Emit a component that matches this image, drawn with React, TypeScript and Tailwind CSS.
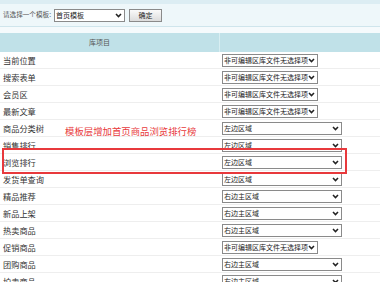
import React from 'react'

const rows: { name: string; kind: 'lib' | 'left' | 'right' }[] = [
  { name: '当前位置', kind: 'lib' },
  { name: '搜索表单', kind: 'lib' },
  { name: '会员区', kind: 'lib' },
  { name: '最新文章', kind: 'lib' },
  { name: '商品分类树', kind: 'left' },
  { name: '销售排行', kind: 'left' },
  { name: '浏览排行', kind: 'left' },
  { name: '发货单查询', kind: 'left' },
  { name: '精品推荐', kind: 'right' },
  { name: '新品上架', kind: 'right' },
  { name: '热卖商品', kind: 'right' },
  { name: '促销商品', kind: 'lib' },
  { name: '团购商品', kind: 'right' },
  { name: '拍卖商品', kind: 'right' },
]

const labels = {
  lib: '非可编辑区库文件无选择项',
  left: '左边区域',
  right: '右边主区域',
}

function Chevron() {
  return (
    <svg width="7" height="5" viewBox="0 0 7 5" className="shrink-0">
      <path d="M1 1 L3.5 3.6 L6 1" fill="none" stroke="#222" strokeWidth="1.5" />
    </svg>
  )
}

function FakeSelect({ text, width }: { text: string; width: string }) {
  return (
    <div
      className={`${width} h-[13px] flex items-center justify-between border border-[#8a8a8a] bg-white pl-[1px] pr-[2px] text-[7px] leading-none text-[#222] whitespace-nowrap overflow-hidden`}
    >
      <span>{text}</span>
      <Chevron />
    </div>
  )
}

export default function App() {
  return (
    <div
      className="relative w-[380px] h-[282px] overflow-hidden bg-white"
      style={{ fontFamily: '"Noto Sans CJK SC", "Noto Sans", sans-serif' }}
    >
      <div className="h-[4px] bg-[#dcedf3]" />
      <div className="h-[23px] bg-[#eef7fa] border-b border-[#cfe5ec] flex items-center pl-[3px]">
        <span className="text-[6.6px] text-[#555] mr-[3px]">请选择一个模板:</span>
        <FakeSelect text="首页模板" width="w-[71px]" />
        <div className="ml-[4px] w-[33px] h-[13px] flex items-center justify-center border border-[#8a8a8a] bg-gradient-to-b from-[#fafafa] to-[#dcdcdc] text-[7px] text-[#222]">
          确定
        </div>
      </div>
      <div className="h-[6px] bg-[#f5fafc]" />
      <div className="h-[19px] bg-[#c0e1e8] flex">
        <div className="w-[220px] flex items-center justify-center pr-[20px] text-[7px] text-[#555] border-r border-[#d8eef2]">
          库项目
        </div>
        <div className="flex-1" />
      </div>
      <div>
        {rows.map((r) => (
          <div key={r.name} className="h-[17px] flex items-center border-b border-[#eeeeee]">
            <div className="w-[220px] pl-[3px] text-[8.2px] text-[#333]">{r.name}</div>
            <div className="pl-[2px]">
              <FakeSelect text={labels[r.kind]} width={r.kind === 'lib' ? 'w-[96px]' : 'w-[120px]'} />
            </div>
          </div>
        ))}
      </div>

      <div className="absolute left-[65px] top-[127px] text-[9.4px] leading-none text-[#e8393c] whitespace-nowrap">
        模板层增加首页商品浏览排行榜
      </div>
      <div className="absolute left-[2px] top-[148px] w-[345px] h-[26px] border-2 border-[#e8393c]" />
    </div>
  )
}
